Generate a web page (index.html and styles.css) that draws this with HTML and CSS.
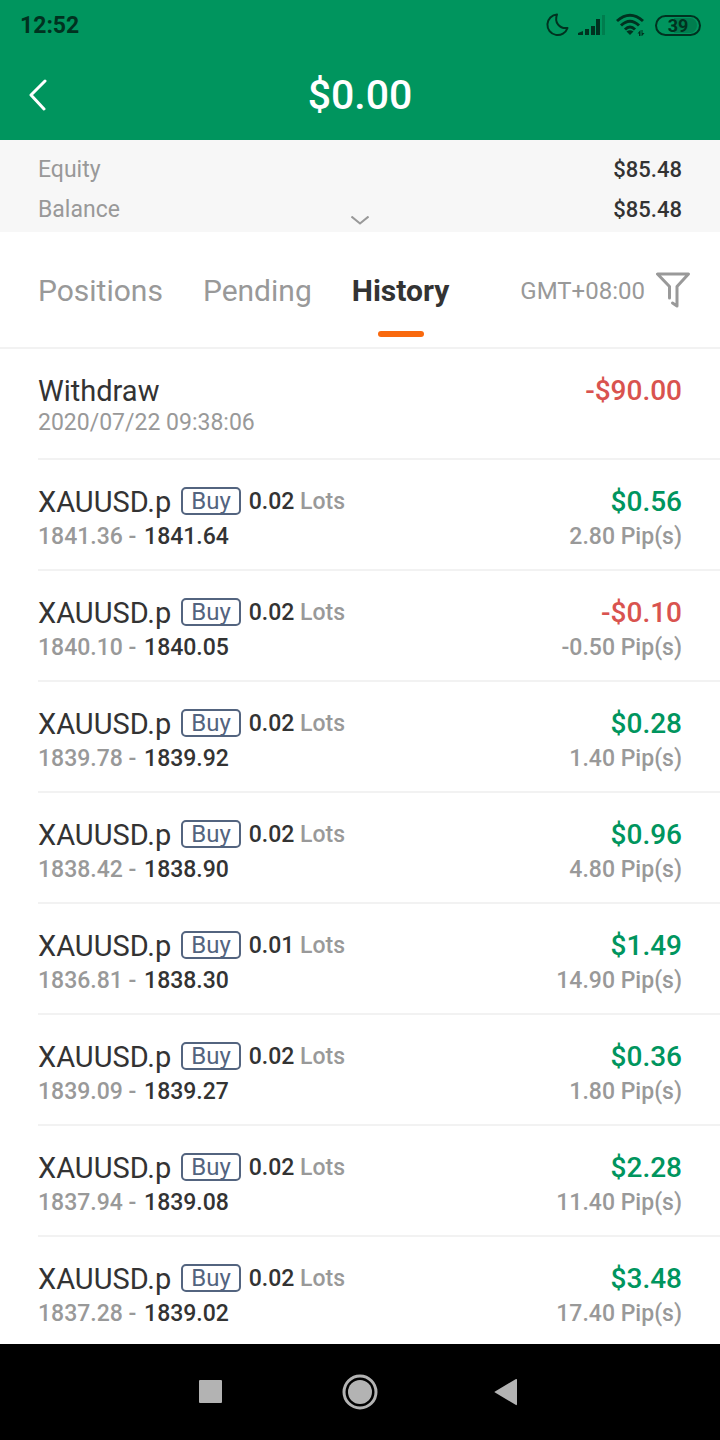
FILE: index.html
```html
<!DOCTYPE html>
<html lang="en">
<head>
    <meta charset="UTF-8">
    <meta name="viewport" content="width=device-width, initial-scale=1.0">
    <title>Trade History</title>
    <link rel="stylesheet" href="styles.css">
</head>
<body>

    <div class="app">
        <div class="status-bar">
            <span class="clock">12:52</span>
            <div class="status-icons">
                <svg class="moon" width="24" height="24" viewBox="0 0 24 24"><path d="M12 1.500A10.300 10.300 0 1 0 22.500 15C14.500 16 9 9.500 12 1.500Z" /></svg>
                <svg class="signal" width="28" height="20" viewBox="0 0 28 20">
                    <path d="M0 20v-2l5-2v4zM7 14h4v6H7zM13 11h4v9h-4zM18 4h4v16h-4z" />
                    <path class="faint" d="M24 0h3v20h-3z" />
                </svg>
                <svg class="wifi" width="30" height="24" viewBox="0 0 30 24">
                    <path class="arc" d="M1 8Q14 -3.500 27 8M5 12.500Q14 4 23 12.500M9 16.500Q14 11.500 19 16.500" />
                    <path d="M10.500 18.500Q14 16 17.500 18.500L14 22z" />
                    <path d="M21.500 20.500l3-3.500v6h-1.500v-2.500zM25.500 17h1v3h2l-2.500 3h-.5z" />
                </svg>
                <span class="battery">39</span>
            </div>
        </div>

        <header class="header">
            <button class="back" aria-label="Back">
                <svg width="18" height="32" viewBox="0 0 18 32"><path d="M16 2L2 16l13 14" /></svg>
            </button>
            <h1 class="title">$0.00</h1>
        </header>

        <section class="summary">
            <div class="summary-row"><span>Equity</span><span class="summary-value">$85.48</span></div>
            <div class="summary-row"><span>Balance</span><span class="summary-value">$85.48</span></div>
            <button class="expand" aria-label="Show details">
                <svg width="18" height="9" viewBox="0 0 18 9"><path d="M.5.500L9 7.500l8.500-7" /></svg>
            </button>
        </section>

        <nav class="tabs">
            <button class="tab">Positions</button>
            <button class="tab">Pending</button>
            <button class="tab active">History</button>
            <span class="timezone">GMT+08:00</span>
            <button class="filter" aria-label="Filter">
                <svg width="34" height="36" viewBox="0 0 34 36"><path d="M13.500 26V14.500L1.500 2h31l-11.500 12.500V34l-4.500-3" /></svg>
            </button>
        </nav>

        <ul class="history">
            <li class="entry">
                <div class="entry-main">
                    <div class="line"><span class="symbol">Withdraw</span></div>
                    <div class="date">2020/07/22 09:38:06</div>
                </div>
                <div class="entry-side">
                    <div class="amount loss">-$90.00</div>
                </div>
            </li>
            <li class="entry">
                <div class="entry-main">
                    <div class="line"><span class="symbol">XAUUSD.p</span><span class="tag">Buy</span><span class="lots"><b>0.02</b> Lots</span></div>
                    <div class="prices">1841.36 - <b>1841.64</b></div>
                </div>
                <div class="entry-side">
                    <div class="amount">$0.56</div>
                    <div class="pips">2.80 Pip(s)</div>
                </div>
            </li>
            <li class="entry">
                <div class="entry-main">
                    <div class="line"><span class="symbol">XAUUSD.p</span><span class="tag">Buy</span><span class="lots"><b>0.02</b> Lots</span></div>
                    <div class="prices">1840.10 - <b>1840.05</b></div>
                </div>
                <div class="entry-side">
                    <div class="amount loss">-$0.10</div>
                    <div class="pips">-0.50 Pip(s)</div>
                </div>
            </li>
            <li class="entry">
                <div class="entry-main">
                    <div class="line"><span class="symbol">XAUUSD.p</span><span class="tag">Buy</span><span class="lots"><b>0.02</b> Lots</span></div>
                    <div class="prices">1839.78 - <b>1839.92</b></div>
                </div>
                <div class="entry-side">
                    <div class="amount">$0.28</div>
                    <div class="pips">1.40 Pip(s)</div>
                </div>
            </li>
            <li class="entry">
                <div class="entry-main">
                    <div class="line"><span class="symbol">XAUUSD.p</span><span class="tag">Buy</span><span class="lots"><b>0.02</b> Lots</span></div>
                    <div class="prices">1838.42 - <b>1838.90</b></div>
                </div>
                <div class="entry-side">
                    <div class="amount">$0.96</div>
                    <div class="pips">4.80 Pip(s)</div>
                </div>
            </li>
            <li class="entry">
                <div class="entry-main">
                    <div class="line"><span class="symbol">XAUUSD.p</span><span class="tag">Buy</span><span class="lots"><b>0.01</b> Lots</span></div>
                    <div class="prices">1836.81 - <b>1838.30</b></div>
                </div>
                <div class="entry-side">
                    <div class="amount">$1.49</div>
                    <div class="pips">14.90 Pip(s)</div>
                </div>
            </li>
            <li class="entry">
                <div class="entry-main">
                    <div class="line"><span class="symbol">XAUUSD.p</span><span class="tag">Buy</span><span class="lots"><b>0.02</b> Lots</span></div>
                    <div class="prices">1839.09 - <b>1839.27</b></div>
                </div>
                <div class="entry-side">
                    <div class="amount">$0.36</div>
                    <div class="pips">1.80 Pip(s)</div>
                </div>
            </li>
            <li class="entry">
                <div class="entry-main">
                    <div class="line"><span class="symbol">XAUUSD.p</span><span class="tag">Buy</span><span class="lots"><b>0.02</b> Lots</span></div>
                    <div class="prices">1837.94 - <b>1839.08</b></div>
                </div>
                <div class="entry-side">
                    <div class="amount">$2.28</div>
                    <div class="pips">11.40 Pip(s)</div>
                </div>
            </li>
            <li class="entry">
                <div class="entry-main">
                    <div class="line"><span class="symbol">XAUUSD.p</span><span class="tag">Buy</span><span class="lots"><b>0.02</b> Lots</span></div>
                    <div class="prices">1837.28 - <b>1839.02</b></div>
                </div>
                <div class="entry-side">
                    <div class="amount">$3.48</div>
                    <div class="pips">17.40 Pip(s)</div>
                </div>
            </li>
        </ul>

        <div class="system-nav">
            <button aria-label="Recent apps">
                <svg width="36" height="36" viewBox="0 0 36 36"><rect x="6" y="6" width="23" height="23" rx="1" /></svg>
            </button>
            <button aria-label="Home">
                <svg width="36" height="36" viewBox="0 0 36 36"><circle cx="18" cy="18" r="12" /><circle class="ring" cx="18" cy="18" r="16" /></svg>
            </button>
            <button aria-label="Back">
                <svg width="36" height="36" viewBox="0 0 36 36"><path d="M4 18.500q-1-.5 0-1L25 5q1-.5 1 1v24q0 1.500-1 1z" /></svg>
            </button>
        </div>
    </div>

</body>
</html>
```
FILE: styles.css
```css
:root {
    --green: #00955e;
    --ink: #333;
    --muted: #999;
    --line: #f2f2f2;
    --status: #003220;
}

* {
    box-sizing: border-box;
}

body {
    margin: 0;
    font-family: Roboto, 'Liberation Sans', sans-serif;
    color: var(--ink);
    background: white;
}

button {
    padding: 0;
    border: none;
    background: none;
    font: inherit;
    color: inherit;
    cursor: pointer;
}

svg {
    display: block;
}

.app {
    display: flex;
    flex-direction: column;
    height: 100vh;
}

/* Status bar */
.status-bar {
    display: flex;
    flex-shrink: 0;
    justify-content: space-between;
    align-items: center;
    height: 52px;
    padding: 0 19px 2px 20px;
    background: var(--green);
    color: var(--status);
}

.clock {
    font-size: 23px;
    font-weight: bold;
}

.status-icons {
    display: flex;
    align-items: center;
    gap: 9px;
    fill: var(--status);
}

.moon {
    fill: none;
    stroke: var(--status);
    stroke-width: 2;
    stroke-linejoin: round;
}

.faint {
    fill: #007d4e;
}

.wifi {
    margin-left: 1px;
}

.arc {
    fill: none;
    stroke: var(--status);
    stroke-width: 3;
}

.battery {
    width: 46px;
    height: 21px;
    padding: 1px 2px;
    border: 2px solid var(--status);
    border-radius: 11px;
    background: linear-gradient(90deg, var(--green) 40%, #007d4e 40%);
    background-clip: content-box;
    font-size: 18px;
    font-weight: bold;
    line-height: 16px;
    text-align: center;
}

/* Header */
.header {
    position: relative;
    display: flex;
    flex-shrink: 0;
    justify-content: center;
    align-items: center;
    height: 88px;
    padding-bottom: 2px;
    background: var(--green);
    color: white;
}

.back {
    position: absolute;
    left: 29px;
}

.back path {
    fill: none;
    stroke: white;
    stroke-width: 3;
    stroke-linecap: round;
    stroke-linejoin: round;
}

.title {
    margin: 0;
    font-size: 41px;
    font-weight: 500;
}

/* Account summary */
.summary {
    position: relative;
    flex-shrink: 0;
    padding: 10px 38px 2px;
    background: #f7f7f7;
}

.summary-row {
    display: flex;
    justify-content: space-between;
    font-size: 23px;
    line-height: 40px;
    color: var(--muted);
}

.summary-value {
    font-size: 22px;
    font-weight: 500;
    color: var(--ink);
}

.expand {
    position: absolute;
    bottom: 7px;
    left: 50%;
    transform: translateX(-50%);
}

.expand path,
.filter path {
    fill: none;
    stroke: var(--muted);
    stroke-width: 2;
}

/* Tabs */
.tabs {
    display: flex;
    flex-shrink: 0;
    align-items: center;
    gap: 40px;
    height: 117px;
    padding: 0 30px 0 38px;
    border-bottom: 2px solid var(--line);
}

.tab {
    position: relative;
    height: 100%;
    padding-top: 2px;
    font-size: 30px;
    color: var(--muted);
}

.tab.active {
    font-weight: bold;
    color: var(--ink);
}

.tab.active::after {
    content: '';
    position: absolute;
    bottom: 10px;
    left: 50%;
    width: 46px;
    height: 6px;
    margin-left: -23px;
    border-radius: 3px;
    background: #f9690e;
}

.timezone {
    margin-left: auto;
    padding-top: 2px;
    font-size: 24px;
    color: var(--muted);
}

.filter {
    margin-left: -29px;
}

.filter path {
    stroke-width: 3;
    stroke-linecap: round;
    stroke-linejoin: round;
}

/* History list */
.history {
    flex: 1;
    min-height: 0;
    margin: 0;
    padding: 0 0 0 38px;
    overflow: hidden;
    list-style: none;
}

.entry {
    display: flex;
    justify-content: space-between;
    min-height: 111px;
    padding: 24px 38px 0 0;
    border-bottom: 2px solid var(--line);
}

.line {
    display: flex;
    align-items: center;
    height: 36px;
}

.symbol {
    font-size: 29px;
}

.tag {
    height: 28px;
    margin: 0 8px 2px 10px;
    padding: 0 8px;
    border: 2px solid #53647f;
    border-radius: 5px;
    font-size: 24px;
    line-height: 24px;
    color: #53647f;
}

.lots,
.prices,
.pips {
    font-size: 23px;
    font-weight: 500;
    line-height: 34px;
    color: var(--muted);
}

.lots b,
.prices b {
    font-weight: 500;
    color: var(--ink);
}

.prices b {
    margin-left: 2px;
}

.date {
    font-size: 23px;
    line-height: 28px;
    color: var(--muted);
}

.entry-side {
    text-align: right;
}

.amount {
    font-size: 28px;
    font-weight: 500;
    line-height: 36px;
    color: var(--green);
}

.amount.loss {
    color: #d9534f;
}

/* Android buttons */
.system-nav {
    display: flex;
    flex-shrink: 0;
    justify-content: center;
    align-items: center;
    gap: 113px;
    height: 96px;
    background: black;
    fill: #b3b3b3;
}

.ring {
    fill: none;
    stroke: #b3b3b3;
    stroke-width: 3;
}
```
